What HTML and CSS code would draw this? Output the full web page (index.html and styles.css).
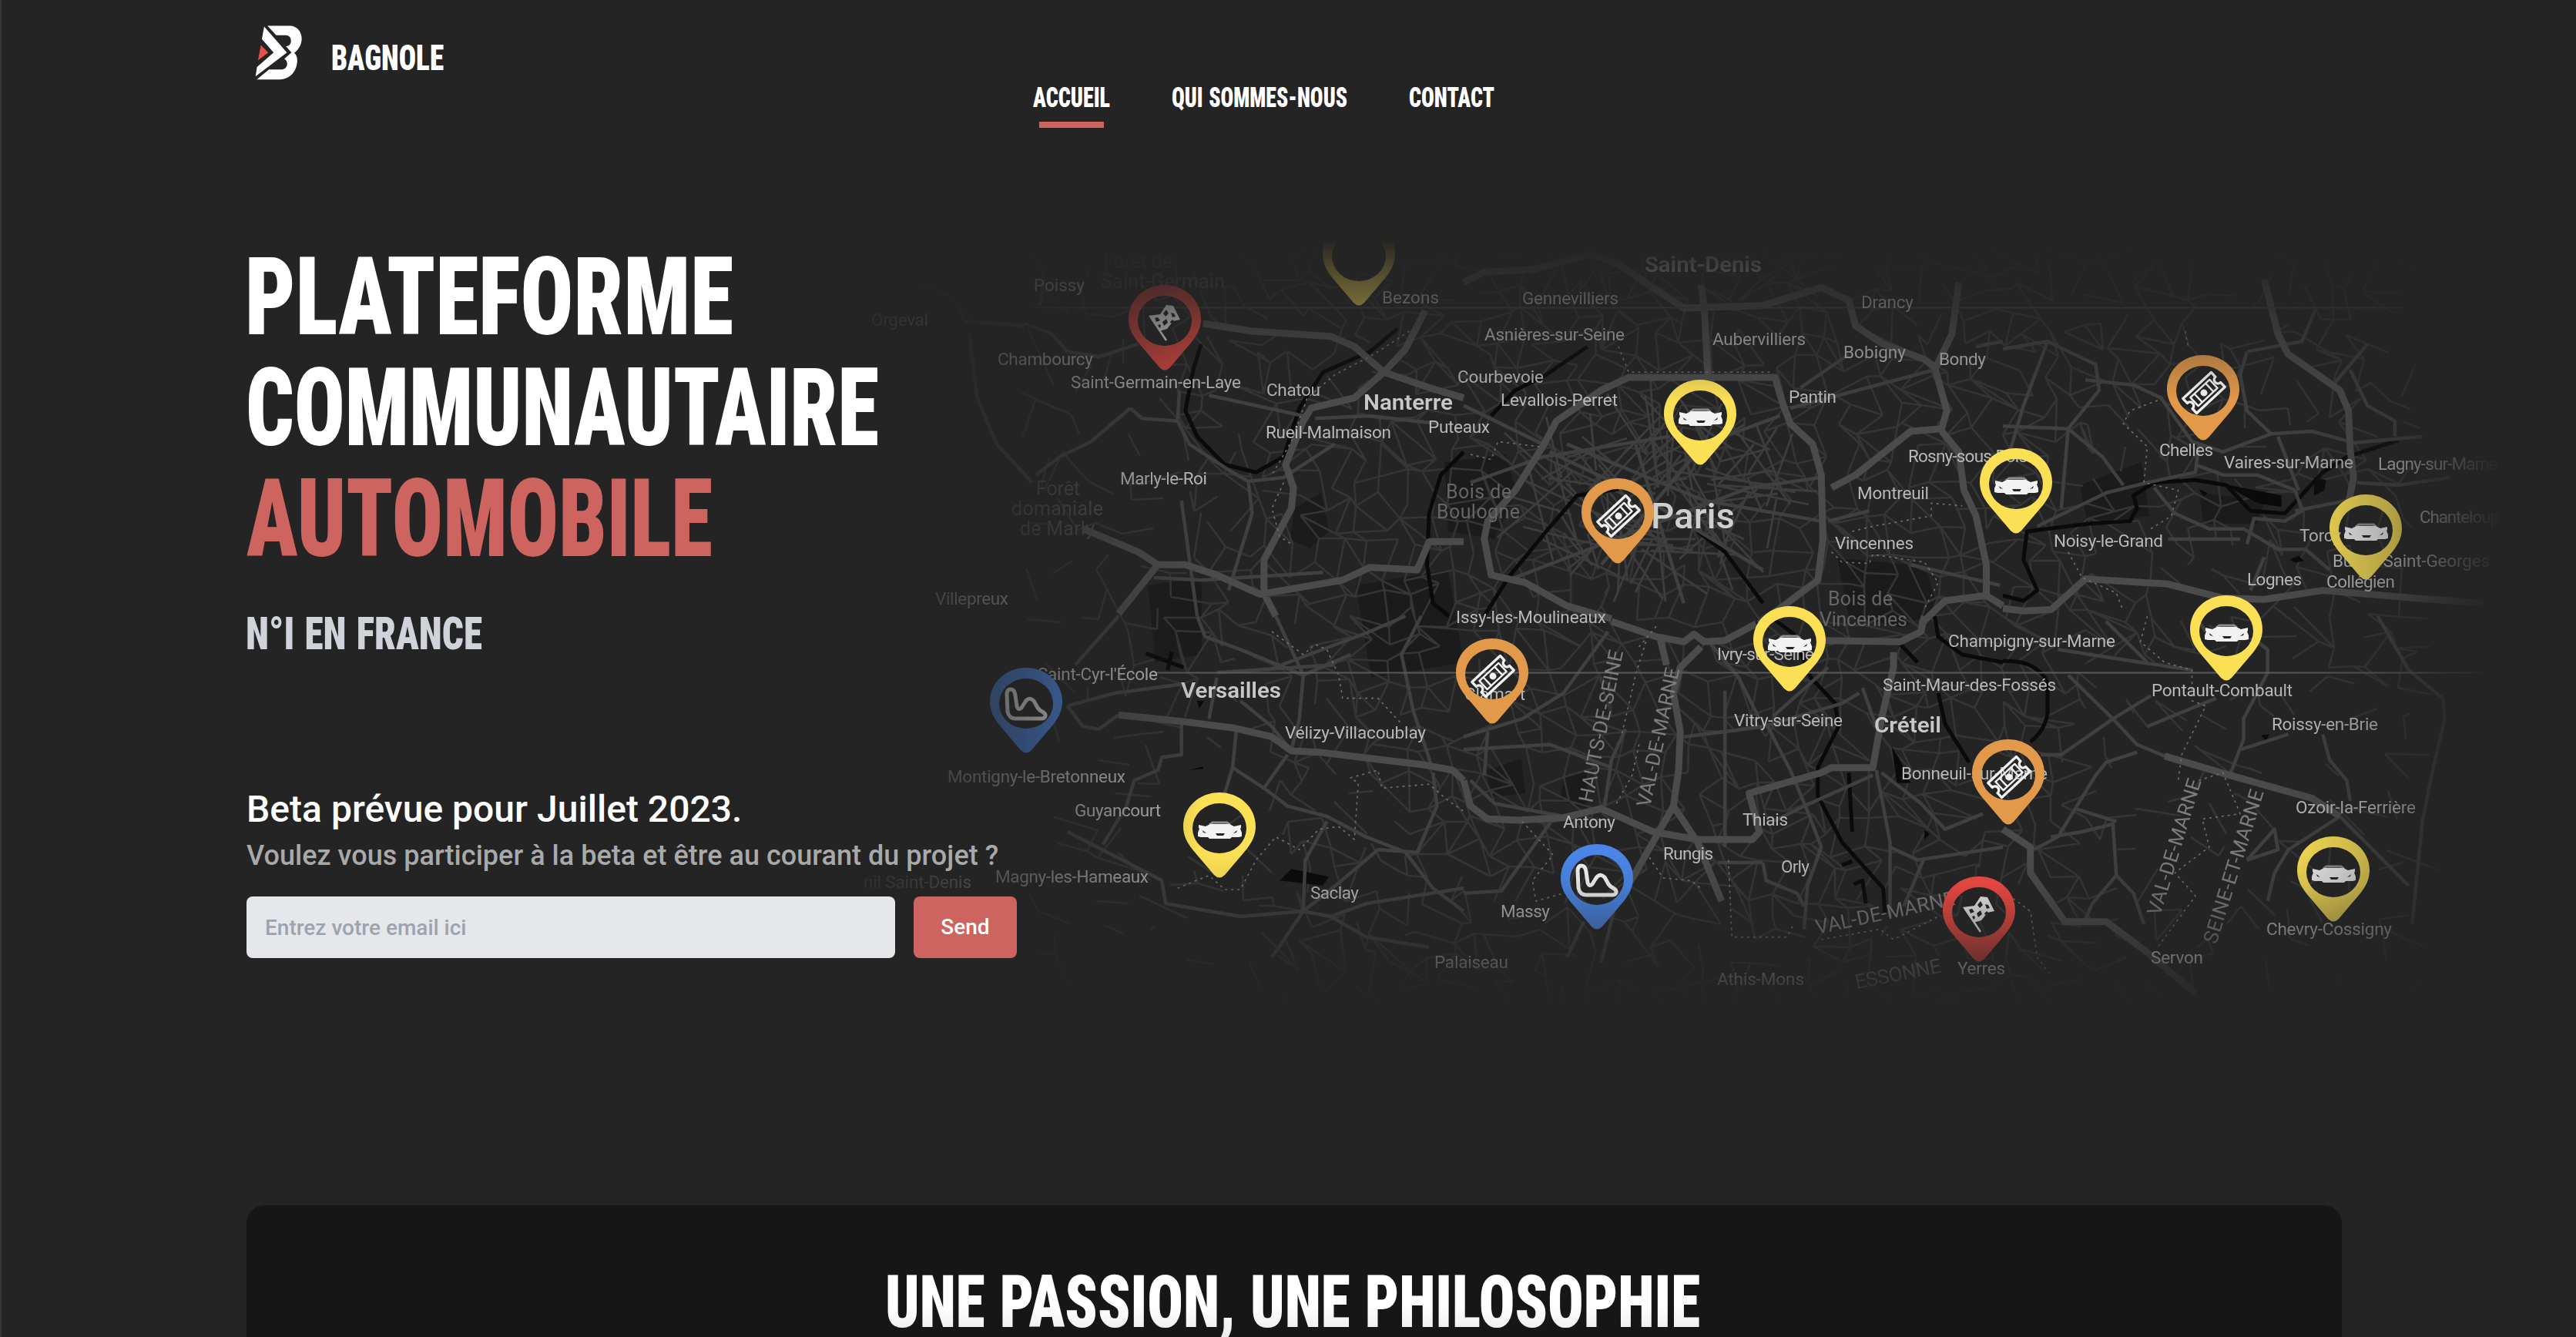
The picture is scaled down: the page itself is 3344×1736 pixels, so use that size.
FILE: index.html
```html
<!DOCTYPE html>
<html lang="fr">
<head>
<meta charset="utf-8">
<title>Bagnole</title>
<link rel="stylesheet" href="styles.css">
</head>
<body>
<svg class="defs" aria-hidden="true">
  <defs>
    <symbol id="pin" viewBox="0 0 94 111"><path fill-rule="evenodd" d="M0 44C0 57 6 66 12 74L40 107Q47 114 54 107L82 74C88 66 94 57 94 44C94 19 73 0 47 0S0 19 0 44ZM47 14a35 32.500 0 1 1 0 65a35 32.500 0 1 1 0-65Z"/></symbol>
    <symbol id="car" viewBox="0 0 94 111"><path fill="none" stroke="#8d8d8d" stroke-width="3" d="M34 42l4-3h19l4 3"/><path fill="#f2f2f2" fill-rule="evenodd" d="M20 42l9 2 6-3h25l6 3 9-2v4l-1 1 2 5v5l-4 1h-9l-2 2H34l-2-2h-9l-4-1v-5l2-5-1-1ZM42 53h12l-2 3h-8ZM25 49l5 4-4-1ZM70 49l-5 4 4-1Z"/></symbol>
    <symbol id="ticket" viewBox="0 0 94 111"><g transform="translate(48 49) rotate(-43)" fill="none" stroke="#f2f2f2" stroke-linejoin="round"><path stroke-width="3.4" d="M-25-13h50v8a5 5 0 0 0 0 10v8h-50v-8a5 5 0 0 0 0-10Z"/><path stroke-width="2.4" d="M-17-7.500h34v15h-34ZM-10-7v14M10-7v14"/><circle r="4.500" fill="#f2f2f2" stroke="none"/></g></symbol>
    <symbol id="track" viewBox="0 0 94 111"><path transform="translate(18 26)" fill="none" stroke="#f2f2f2" stroke-width="5" stroke-linejoin="round" d="M4 9Q4 2 9 2Q14 2 15 10L17 24Q19 30 23 26L28 18Q33 11 39 17L44 26Q46 29 50 31Q55 34 54 37Q53 40 49 40H15Q7 40 5 31Z"/></symbol>
    <symbol id="flag" viewBox="0 0 94 111"><g transform="translate(26 25)"><path fill="none" stroke="#f2f2f2" stroke-width="2.600" d="M3 17l20 30"/><path fill="#f2f2f2" d="M0 15l15-2 8-12 9 1 9 18-9 2-8 10-10 3Z"/><path fill="#242424" d="M8 18l4-1 3 4-5 2ZM19 12l4-5 3 5-4 4ZM18 23l5-4 2 5-5 4ZM29 11l4 1 2 4-4 1ZM12 27l3-1 1 3-2 2ZM28 23l3-3 2 2-4 3Z"/></g></symbol>
  </defs>
</svg>

<svg class="map" viewBox="1100 290 2244 1050" aria-label="Carte">
  <g class="woods">
    <path d="M1875 600L1955 590 1968 640 1940 700 1880 690ZM2385 725L2500 735 2515 790 2470 815 2400 800ZM1760 760L1880 740 1900 860 1780 880ZM1680 660L1715 640 1725 690 1700 712 1675 700ZM1490 760L1560 750 1560 850 1500 860ZM2700 630L2780 600 2790 670 2710 680ZM2855 640L2940 650 2930 680 2860 680ZM2030 1010L2060 1000 2060 1050 2025 1040ZM1930 1000L1975 985 1980 1030 1935 1035Z"/>
  </g>
  <path id="streets" class="streets"/>
  <path id="avenues" class="avenues"/>

  <g class="water">
    <g transform="translate(1100 300) scale(.5102 .3333)"><path d="M1400 380L1330 470 1210 550 1150 690 1110 880 1040 940 960 910 890 800 860 700 880 540 900 440M1568 860L1510 950 1480 1100 1475 1300 1490 1450 1530 1500"/></g>
    <g transform="translate(1900 300) scale(.4464 .3333)"><path d="M60 1500L130 1350 240 1170 330 1030 450 1005M680 1170L760 1250 870 1450M360 450L240 560 150 620 80 720"/></g>
    <g transform="translate(2600 300) scale(.4464 .3333)"><path d="M0 1420L60 1440 100 1400 60 1280 70 1170 250 1140 370 1130 390 1080 380 1030 440 980 560 970 650 990 720 1090 820 1100 930 940 1000 880 1150 815"/><path class="lake" d="M640 985L810 1030 810 1075 740 1060ZM905 960L940 970 935 1010 905 1030ZM570 1005L595 1020 585 1035ZM835 1280L860 1265 875 1285 850 1292Z"/></g>
    <g transform="translate(1900 800) scale(.4464 .3333)"><path d="M900 10L960 70 1010 240 1080 340 1090 430 1030 590 1030 700 1100 880 1220 1060 1225 1160M1270 110L1320 180M1370 0L1380 80 1450 150 1568 180M1380 300L1400 420 1470 570M1120 610L1130 840M1100 970L1130 955M1135 1045L1160 1030 1170 1120"/><path class="lake" d="M1245 510L1265 550 1300 650 1260 650ZM1340 830L1355 850 1340 870Z"/></g>
    <g transform="translate(1100 800) scale(.5102 .3333)"><path class="lake" d="M1100 1030L1130 985 1225 1015 1210 1050ZM890 330L908 330 895 360ZM870 600L905 585 905 595Z"/><path d="M760 145L855 200M825 140L815 210"/></g>
    <g transform="translate(2600 800) scale(.4464 .3333)"><path d="M0 175Q100 170 130 260L130 380Q120 450 80 490"/><path class="lake" d="M750 465L775 460 765 485Z"/></g>
  </g>

  <g class="roads">
    <g transform="translate(1100 300) scale(.5102 .3333)"><path d="M845 620L840 740 870 830 980 940 1020 975 1110 960 1240 830M1020 975L1030 1100 990 1300 970 1400M720 690L620 820 540 880 480 950M450 360L520 400 560 470 640 490 740 440M310 400L330 650 380 830 470 980M460 60L500 170 490 290M180 200L270 260 300 350 450 370M780 1350L900 1360 1210 1330M850 1050L890 1500M720 690L750 730 840 740M920 640L1160 720M1190 730L1330 720 1500 750"/></g>
    <g transform="translate(1900 300) scale(.4464 .3333)"><path d="M1120 480L980 610M1370 540L950 690M0 680L230 830M1490 450L1568 430M20 980L230 880 600 800M250 860L500 1020 870 1320M500 830L640 1450M920 720L700 830 400 1300M1040 1130L700 1050 300 830M1040 960L830 1000 130 1360M1300 1300L1560 1380M1060 1130L1180 1090"/></g>
    <g transform="translate(2600 300) scale(.4464 .3333)"><path d="M0 460L130 430 270 520 280 620 190 770 290 880 350 990M240 580L380 600 460 650 550 820 640 860 780 790 900 780 1020 825 1220 800M100 1150L300 1020 420 980 560 940 570 830M560 910L640 950 740 950 850 1010M440 1000L500 1100 600 1160 700 1160 800 1240 880 1240 950 1320M480 1200L690 1200M710 470L690 560 710 700 780 790M710 470L870 430 910 300M960 600L1060 440M1010 540L1060 680 1140 740 1140 800M760 1270L720 1400M850 1090L1000 1050M850 1010L870 1090 820 1130 730 1120 710 1220M190 770L0 760M190 770L170 1080M130 430L60 680 20 860M1030 980L1150 990 1300 960M800 800L860 1010"/></g>
    <g transform="translate(1100 800) scale(.5102 .3333)"><path d="M1130 525L1080 430 1000 330M1120 540L1060 670 1120 740 1220 780 1320 860 1420 920 1490 1060 1568 1150M1490 610L1500 740 1450 920 1350 910 1250 1040 1160 1150 1080 1330M1160 1150L1165 950 1220 800M560 350L680 300 850 265M690 0L580 190M850 410L850 540 800 550 790 600 730 640 710 740 650 890M560 840L700 950 800 1030 810 1120 1000 1170 1160 1150 1230 1170 1320 1120 1568 1060M1230 1170L1320 1250 1480 1290M940 240L920 400M890 0L910 80 1000 130 1160 230 1150 400 1130 520M1090 0L1160 230M1460 0L1410 150 1440 370 1490 600M1070 210L1330 60 1420 0M990 440L980 590 1060 670M980 590L960 690M940 220L1240 190M1160 230L1220 190 1280 150M690 385L640 440 600 430 560 350"/></g>
    <g transform="translate(1900 800) scale(.4464 .3333)"><path d="M440 1130L400 1350M350 1190L300 1330M1200 600L1240 880 1240 1170M1190 620L990 740 900 800M1215 610L1330 730 1400 830 1510 770M0 470L170 400 290 300 420 60M70 450L60 620M470 440L430 560 410 740M760 290L760 900M880 420L950 600 1000 760 1040 900 1000 1050 990 1220M640 470L760 450 870 430 1100 340 1150 300M870 960L880 1030 970 1080 990 1130M740 960L870 960M1160 280L1200 430M20 640L90 730 290 780M0 1080L110 1070 260 790M0 520L250 500 430 590M860 400L800 240 720 110M900 390L1060 200M1240 900L1320 950 1568 900M1340 940L1280 1130"/></g>
    <g transform="translate(2600 800) scale(.4464 .3333)"><path d="M110 540L170 540 320 400 430 310M190 230L320 400 390 500 470 545M660 620L700 480 700 400 770 220 770 130 740 100M90 910L160 860 270 620 300 570 390 530M1090 0L1180 210 1280 320 1285 400 1250 600 1220 800 1190 1200M930 460L950 560 1000 640 1010 720M980 780L830 910 790 1000 770 1110M710 950L800 910 790 830 710 950M690 520L830 460M980 780L1180 1050M140 860L230 840 320 810 330 1010 260 1120 240 1180M330 1010L380 1080 410 1200M210 750L330 800M160 130L400 180 550 210M560 0L590 60M420 430L620 320M300 20L420 180"/></g>
  </g>

  <g class="highways">
    <g transform="translate(1100 300) scale(.5102 .3333)"><path d="M905 360L1030 390 1230 410 1290 450 1365 550 1480 610 1568 650M1470 310L1420 460 1365 550 1290 650 1180 690 1160 740 1115 910 1135 1000 1130 1080 1060 1280 1060 1410 1090 1500M600 1160L740 1250 790 1300 860 1300 940 1340 1050 1415 1260 1360 1330 1310 1450 1320 1480 1210 1568 1210M790 1300L690 1490"/></g>
    <g transform="translate(1900 300) scale(.4464 .3333)"><path d="M430 1510L300 1460 180 1370 80 1340 60 1200 70 1130 150 1010 230 840 270 740 400 620 480 570 905 570 930 680 950 750 1015 830 1040 950 1045 1200 1030 1360 940 1450 860 1530M690 210L700 300 710 560M1070 1000L1140 950 1300 780 1390 770 1405 700 1370 530 1340 500 1220 440 1140 370 1120 270 1040 220 870 290 640 300 450 130 370 90 200 150 60 160 0 200M1390 780L1440 860 1455 1010 1490 1110 1520 1300 1520 1420M1330 1530L1400 1440 1520 1420 1568 1460M1440 200L1420 400 1370 540"/></g>
    <g transform="translate(2600 300) scale(.4464 .3333)"><path d="M760 190L800 400 830 480 980 620 1005 700 1010 850 1020 960 1005 1060M0 1470L60 1480 140 1475 240 1355 480 1375 640 1430 760 1435 930 1400 1200 1430 1400 1450"/></g>
    <g transform="translate(1100 800) scale(.5102 .3333)"><path d="M690 385L850 410 980 435 1080 470 1130 525 1200 530 1470 580 1540 600 1568 640"/></g>
    <g transform="translate(1900 800) scale(.4464 .3333)"><path d="M430 20L560 80 640 100 670 70 700 100 760 95 850 30M570 80L590 190M690 120L630 200 610 300 630 450 625 600 610 740 500 1000 440 1130M610 740L680 880M1050 95L1270 100 1330 60 1340 0M0 640L20 740 70 790 160 795 290 785 400 750 550 840 680 870 840 870 860 840 830 690 1040 610 1070 590 1190 590 1215 400 1250 200 1250 140M680 880L750 1110"/></g>
    <g transform="translate(2600 800) scale(.4464 .3333)"><path d="M470 545L660 620 900 710 980 780M0 830L80 900 80 1000 180 1190 300 1190 420 1310 560 1470"/></g>
  </g>

  <g class="limits">
    <g transform="translate(1100 300) scale(.5102 .3333)"><path d="M1430 390L1340 480 1240 560 1170 650 1130 820 1080 950M1110 980L1080 1080 1100 1190 1130 1220"/></g>
    <g transform="translate(1900 300) scale(.4464 .3333)"><path d="M450 450L480 550 900 550M20 870L80 890 100 820 220 840M1070 1250L1100 1290 1180 1295 1190 1260 1340 1290 1380 1370 1340 1470M1130 1170L1190 1150 1360 1110 1360 1060 1450 1070"/></g>
    <g transform="translate(2600 300) scale(.4464 .3333)"><path d="M530 390L540 460M450 660L370 700 350 750 420 840 410 980 510 1010 490 1110 430 1160M190 1250L230 1350 330 1410 350 1480"/></g>
    <g transform="translate(1100 800) scale(.5102 .3333)"><path d="M1080 60L1160 150 1190 110 1220 130 1250 230 1260 320 1350 320 1410 420M840 1060L920 1010 960 1065 1000 1065 1040 950 1090 860 1150 910 1200 830 1250 820 1290 870 1300 650 1280 630 1350 600 1360 670 1480 655 1530 720 1568 760"/></g>
    <g transform="translate(1900 800) scale(.4464 .3333)"><path d="M530 100L500 230 460 460M510 500L490 620 440 740M170 800L260 930 200 1030 210 1110 290 1080M540 940L580 1020 660 1030 690 1060M770 950L780 1250 940 1250 960 1200M1040 1260L1210 1220 1250 1260 1380 1170M560 40L510 120"/></g>
    <g transform="translate(2600 800) scale(.4464 .3333)"><path d="M420 0L400 100 470 180 550 210 550 330 590 350 520 540 510 640M570 640L640 610 690 770 580 790 600 900 500 1000 560 1090 450 1290M30 1100L80 1150 100 1330 140 1400"/></g>
  </g>
  <path class="seam" d="M1340 399.500H3120"/>
  <path class="seam seam-light" d="M1500 873.500H3220"/>

  <g class="places">
    <text x="1342" y="378" textLength="66" class="near">Poissy</text>
    <text x="1131" y="423" textLength="74" class="near">Orgeval</text>
    <text x="1295" y="474" textLength="124">Chambourcy</text>
    <text x="1390" y="504" textLength="221">Saint-Germain-en-Laye</text>
    <text x="1644" y="514" textLength="70">Chatou</text>
    <text x="1643" y="569" textLength="163">Rueil-Malmaison</text>
    <text x="1454" y="629" textLength="113">Marly-le-Roi</text>
    <text x="1214" y="785" textLength="95">Villepreux</text>
    <text x="1794" y="394" textLength="74">Bezons</text>
    <text x="1976" y="395" textLength="125">Gennevilliers</text>
    <text x="1927" y="442" textLength="182">Asnières-sur-Seine</text>
    <text x="1892" y="497" textLength="112">Courbevoie</text>
    <text x="1948" y="527" textLength="152">Levallois-Perret</text>
    <text x="1854" y="562" textLength="80">Puteaux</text>
    <text x="2223" y="448" textLength="121">Aubervilliers</text>
    <text x="2393" y="465" textLength="81">Bobigny</text>
    <text x="2517" y="474" textLength="61">Bondy</text>
    <text x="2416" y="400" textLength="68">Drancy</text>
    <text x="2322" y="523" textLength="62">Pantin</text>
    <text x="2477" y="600" textLength="155">Rosny-sous-Bois</text>
    <text x="2411" y="648" textLength="93">Montreuil</text>
    <text x="2382" y="713" textLength="102">Vincennes</text>
    <text x="1890" y="809" textLength="195">Issy-les-Moulineaux</text>
    <text x="2803" y="592" textLength="70">Chelles</text>
    <text x="2887" y="608" textLength="168">Vaires-sur-Marne</text>
    <text x="3087" y="610" textLength="156">Lagny-sur-Marne</text>
    <text x="2985" y="703" textLength="54">Torcy</text>
    <text x="2666" y="710" textLength="142">Noisy-le-Grand</text>
    <text x="3141" y="679" textLength="104">Chanteloup</text>
    <text x="3028" y="736" textLength="204">Bussy-Saint-Georges</text>
    <text x="2917" y="760" textLength="71">Lognes</text>
    <text x="3020" y="763" textLength="89">Collégien</text>
    <text x="1347" y="883" textLength="156">Saint-Cyr-l'École</text>
    <text x="1668" y="959" textLength="183">Vélizy-Villacoublay</text>
    <text x="1230" y="1016" textLength="231">Montigny-le-Bretonneux</text>
    <text x="1395" y="1060" textLength="112">Guyancourt</text>
    <text x="1292" y="1146" textLength="199">Magny-les-Hameaux</text>
    <text x="1121" y="1153" textLength="140">nil Saint-Denis</text>
    <text x="1701" y="1167" textLength="63">Saclay</text>
    <text x="1862" y="1257" textLength="96">Palaiseau</text>
    <text x="1901" y="909" textLength="79">Clamart</text>
    <text x="2229" y="857" textLength="126">Ivry-sur-Seine</text>
    <text x="2444" y="897" textLength="225">Saint-Maur-des-Fossés</text>
    <text x="2529" y="840" textLength="217">Champigny-sur-Marne</text>
    <text x="2251" y="943" textLength="141">Vitry-sur-Seine</text>
    <text x="2468" y="1012" textLength="190">Bonneuil-sur-Marne</text>
    <text x="2029" y="1075" textLength="68">Antony</text>
    <text x="2262" y="1072" textLength="59">Thiais</text>
    <text x="2159" y="1116" textLength="65">Rungis</text>
    <text x="2312" y="1133" textLength="37">Orly</text>
    <text x="1948" y="1191" textLength="64">Massy</text>
    <text x="2229" y="1279" textLength="113">Athis-Mons</text>
    <text x="2541" y="1265" textLength="62" class="near">Yerres</text>
    <text x="2793" y="904" textLength="183">Pontault-Combault</text>
    <text x="2949" y="948" textLength="138">Roissy-en-Brie</text>
    <text x="2980" y="1056" textLength="156">Ozoir-la-Ferrière</text>
    <text x="2942" y="1214" textLength="163">Chevry-Cossigny</text>
    <text x="2792" y="1251" textLength="68" class="near">Servon</text>
  </g>
  <g class="places towns">
    <text x="1770" y="532" textLength="116" lengthAdjust="spacingAndGlyphs">Nanterre</text>
    <text x="1533" y="906" textLength="130" lengthAdjust="spacingAndGlyphs">Versailles</text>
    <text x="2433" y="951" textLength="87" lengthAdjust="spacingAndGlyphs">Créteil</text>
    <text x="2135" y="353" textLength="152" lengthAdjust="spacingAndGlyphs">Saint-Denis</text>
  </g>
  <text class="capital" x="2143" y="686" textLength="109" lengthAdjust="spacingAndGlyphs">Paris</text>
  <g class="parks">
    <g class="forest">
      <text x="1345" y="643" textLength="57">Forêt</text>
      <text x="1313" y="669" textLength="119">domaniale</text>
      <text x="1324" y="695" textLength="97">de Marly</text>
      <text x="1432" y="348" textLength="90">Forêt de</text>
      <text x="1429" y="374" textLength="161">Saint-Germain</text>
    </g>
    <text x="1877" y="647" textLength="85">Bois de</text>
    <text x="1865" y="673" textLength="108">Boulogne</text>
    <text x="2373" y="786" textLength="84">Bois de</text>
    <text x="2362" y="813" textLength="114">Vincennes</text>
  </g>
  <g class="counties">
    <text transform="translate(2067 1043) rotate(-78.500)" textLength="201">HAUTS-DE-SEINE</text>
    <text transform="translate(2142 1049) rotate(-78)" textLength="184">VAL-DE-MARNE</text>
    <text transform="translate(2804 1190) rotate(-73)" textLength="184">VAL-DE-MARNE</text>
    <text transform="translate(2877 1227) rotate(-72.700)" textLength="208">SEINE-ET-MARNE</text>
    <text transform="translate(2359 1213) rotate(-12)" textLength="184">VAL-DE-MARNE</text>
    <text transform="translate(2410 1284) rotate(-11)" textLength="113">ESSONNE</text>
  </g>

  <g class="pins">
    <g class="yellow" transform="translate(2160 493)"><use href="#pin" width="94" height="111"/><use href="#car" width="94" height="111"/></g>
    <g class="yellow" transform="translate(2570 582)"><use href="#pin" width="94" height="111"/><use href="#car" width="94" height="111"/></g>
    <g class="yellow" transform="translate(3024 642)"><use href="#pin" width="94" height="111"/><use href="#car" width="94" height="111"/></g>
    <g class="yellow" transform="translate(2843 773)"><use href="#pin" width="94" height="111"/><use href="#car" width="94" height="111"/></g>
    <g class="yellow" transform="translate(2276 787)"><use href="#pin" width="94" height="111"/><use href="#car" width="94" height="111"/></g>
    <g class="yellow" transform="translate(1536 1029)"><use href="#pin" width="94" height="111"/><use href="#car" width="94" height="111"/></g>
    <g class="yellow" transform="translate(2982 1086)"><use href="#pin" width="94" height="111"/><use href="#car" width="94" height="111"/></g>
    <g class="yellow" transform="translate(1717 286)"><use href="#pin" width="94" height="111"/></g>
    <g class="orange" transform="translate(2053 621)"><use href="#pin" width="94" height="111"/><use href="#ticket" width="94" height="111"/></g>
    <g class="orange" transform="translate(2813 461)"><use href="#pin" width="94" height="111"/><use href="#ticket" width="94" height="111"/></g>
    <g class="orange" transform="translate(1890 829)"><use href="#pin" width="94" height="111"/><use href="#ticket" width="94" height="111"/></g>
    <g class="orange" transform="translate(2560 960)"><use href="#pin" width="94" height="111"/><use href="#ticket" width="94" height="111"/></g>
    <g class="red" transform="translate(1465 370)"><use href="#pin" width="94" height="111"/><use href="#flag" width="94" height="111"/></g>
    <g class="red strong" transform="translate(2522 1138)"><use href="#pin" width="94" height="111"/><use href="#flag" width="94" height="111"/></g>
    <g class="blue" transform="translate(1285 867)"><use href="#pin" width="94" height="111"/><use href="#track" width="94" height="111"/></g>
    <g class="blue" transform="translate(2026 1096)"><use href="#pin" width="94" height="111"/><use href="#track" width="94" height="111"/></g>
  </g>
</svg>

<div class="page">
  <header class="header">
    <a class="brand">
      <svg class="logo" viewBox="93 100 184 213"><g fill="#fff"><path d="M142 101H230C258 101 276 125 276 152C276 175 262 196 247 207C258 217 260 232 258 245C254 285 225 311 190 311H100L148 272H195C210 272 219 262 219 250C219 240 214 234 208 230L236 206L214 181C226 182 234 172 234 160C234 147 226 138 214 138H176Z"/><path d="M129 104L218 206L95 299L101 262L166 206L120 153Z"/></g><path fill="#e0524c" d="M116 176L145 206L105 236Z"/></svg>
      <svg class="display" width="144" height="44"><text x="-2" y="39" font-size="47" textLength="146" lengthAdjust="spacingAndGlyphs">BAGNOLE</text></svg>
    </a>
    <nav class="nav">
      <a class="active"><svg class="display" width="100" height="40"><text x="0" y="33" font-size="36" textLength="100" lengthAdjust="spacingAndGlyphs">ACCUEIL</text></svg></a>
      <a><svg class="display" width="228" height="40"><text x="-1" y="33" font-size="36" textLength="228" lengthAdjust="spacingAndGlyphs">QUI SOMMES-NOUS</text></svg></a>
      <a><svg class="display" width="110" height="40"><text x="-2" y="33" font-size="36" textLength="111" lengthAdjust="spacingAndGlyphs">CONTACT</text></svg></a>
    </nav>
  </header>

  <main class="hero">
    <h1 class="title">
      <svg class="display" width="840" height="144"><text x="-2" y="122" font-size="141" textLength="634" lengthAdjust="spacingAndGlyphs">PLATEFORME</text></svg>
      <svg class="display" width="840" height="144"><text x="-1" y="122" font-size="141" textLength="822" lengthAdjust="spacingAndGlyphs">COMMUNAUTAIRE</text></svg>
      <svg class="display accent" width="840" height="144"><text x="0" y="122" font-size="141" textLength="605" lengthAdjust="spacingAndGlyphs">AUTOMOBILE</text></svg>
    </h1>
    <h2 class="rank"><svg class="display soft" width="320" height="60"><text x="-1" y="51" font-size="59" textLength="307" lengthAdjust="spacingAndGlyphs">N°I EN FRANCE</text></svg></h2>
    <section class="signup">
      <p class="beta">Beta prévue pour Juillet 2023.</p>
      <p class="ask">Voulez vous participer à la beta et être au courant du projet ?</p>
      <form class="form">
        <input class="email" type="email" placeholder="Entrez votre email ici">
        <button class="send" type="button">Send</button>
      </form>
    </section>
  </main>

  <section class="card">
    <svg class="display" width="1060" height="98">
      <defs><linearGradient id="fade" gradientUnits="userSpaceOnUse" x1="0" y1="30" x2="0" y2="98"><stop offset=".4" stop-color="#fff"/><stop offset="1" stop-color="#eaeaea"/></linearGradient></defs>
      <text x="-1" y="85" font-size="95" fill="url(#fade)" textLength="1058" lengthAdjust="spacingAndGlyphs">UNE PASSION, UNE PHILOSOPHIE</text>
    </svg>
  </section>
</div>
<script src="streets.js"></script>
</body>
</html>
```
FILE: styles.css
```css
* { box-sizing: border-box; margin: 0; padding: 0; }
body {
  width: 3344px;
  height: 1736px;
  overflow: hidden;
  position: relative;
  background: #242424;
  color: #fff;
  font-family: Roboto, "Liberation Sans", sans-serif;
}
.defs { position: absolute; width: 0; height: 0; }

.page {
  position: relative;
  height: 1736px;
  padding-left: 320px;
  display: flex;
  flex-direction: column;
  box-shadow: inset 2px 0 0 #363636;
}
.display {
  display: block;
  overflow: visible;
  fill: #fff;
  font-family: Roboto, "Liberation Sans", sans-serif;
  font-weight: 900;
  font-stretch: 75%;
  word-spacing: .09em;
}
.accent { fill: #cd645f; }
.soft { fill: #d1d3da; }

.header { display: flex; height: 312px; }
.brand { display: flex; width: 1021px; padding: 33px 0 0 11px; gap: 40px; }
.logo { width: 61px; height: 71px; }
.brand .display { margin-top: 19px; }
.nav { display: flex; gap: 81px; padding-top: 106px; align-items: flex-start; }
.nav a { display: flex; flex-direction: column; align-items: center; }
.active::after { content: ""; width: 84px; height: 8px; margin-top: 12px; background: #cd645f; }

.hero { height: 1253px; }
.title { width: 840px; }
.rank { margin-top: 48px; height: 60px; }
.signup { margin-top: 167px; width: 1000px; }
.title, .rank { display: flex; flex-direction: column; }
.beta { font-size: 48px; line-height: 64px; font-weight: 500; letter-spacing: .02px; }
.ask { font-size: 36px; line-height: 56px; font-weight: 500; color: #a9a9a9; white-space: nowrap; letter-spacing: .03px; }
.form { display: flex; gap: 24px; margin-top: 25px; }
.email {
  width: 842px;
  height: 80px;
  padding: 0 24px;
  border: 0;
  border-radius: 8px;
  background: #e5e7eb;
  font: 500 28px Roboto, "Liberation Sans", sans-serif;
}
.email::placeholder { color: #9ca3af; opacity: 1; }
.send {
  width: 134px;
  height: 80px;
  padding-bottom: 2px;
  border: 0;
  border-radius: 8px;
  background: #cd645f;
  color: #fff;
  font: 500 28px Roboto, "Liberation Sans", sans-serif;
}

.card {
  width: 2720px;
  height: 171px;
  padding-top: 73px;
  border-radius: 24px 24px 0 0;
  background: #161616;
  display: flex;
  justify-content: center;
}

/* The map fades into the page on all four sides. */
.map {
  position: absolute;
  left: 1100px;
  top: 290px;
  width: 2244px;
  height: 1050px;
  -webkit-mask-image:
    linear-gradient(to right, rgba(0,0,0,.08) 20px, rgba(0,0,0,.2) 120px, rgba(0,0,0,.4) 230px, rgba(0,0,0,.68) 340px, #000 460px, #000 1850px, rgba(0,0,0,.85) 1930px, rgba(0,0,0,.65) 2010px, rgba(0,0,0,.32) 2070px, rgba(0,0,0,.06) 2130px, transparent 2160px),
    linear-gradient(to bottom, transparent 20px, rgba(0,0,0,.2) 60px, rgba(0,0,0,.36) 100px, rgba(0,0,0,.66) 155px, #000 230px, #000 820px, rgba(0,0,0,.9) 860px, rgba(0,0,0,.64) 910px, rgba(0,0,0,.3) 965px, transparent 1030px);
  -webkit-mask-composite: source-in;
  mask-composite: intersect;
}
.map path { vector-effect: non-scaling-stroke; }
.woods { fill: #1b1b1b; }
.streets, .avenues, .water, .roads, .highways, .limits, .seam { fill: none; stroke-linejoin: round; }
.streets { stroke: #353535; stroke-width: 2.6; }
.avenues { stroke: #3d3d3d; stroke-width: 2.8; }
.roads { stroke: #404040; stroke-width: 4.500; }
.highways { stroke: #4b4b4b; stroke-width: 9; }
.water { stroke: #0a0a0a; stroke-width: 5; }
.water .lake { fill: #0a0a0a; stroke: none; }
.limits { stroke: #707070; stroke-width: 1.600; stroke-dasharray: 3 5; }
.seam { stroke: #424242; stroke-width: 2; }
.seam-light { stroke: #5a5a5a; }
.places { fill: #b8b8b8; font-size: 22.500px; }
.places .near { fill: #e6e6e6; }
.towns { fill: #c8c8c8; font-size: 28px; font-weight: 600; }
.capital { fill: #cfcfcf; font-size: 46px; font-weight: 500; }
.parks { fill: #666; font-size: 25px; }
.forest { fill: #4c4c4c; }
.counties { fill: #7c7c7c; font-size: 26px; }
.yellow { fill: #fbe055; }
.orange { fill: #e2994a; }
.red { fill: #dd4740; }
.strong { fill: #f44a42; }
.blue { fill: #4a86e8; }
```
FILE: streets.js
```js
// Fills the map with a dense, repeatable network of minor streets.
(function () {
  var seed = 75011;
  function rnd() {
    seed = (seed * 16807) % 2147483647;
    return seed / 2147483647;
  }
  var cell = 30, cols = 60, rows = 33, x0 = 1340, y0 = 320;
  var pts = [];
  for (var r = 0; r <= rows; r++) {
    pts.push([]);
    for (var c = 0; c <= cols; c++) {
      pts[r].push([
        Math.round(x0 + (c + (rnd() - 0.5) * 0.95 + (r % 2) * 0.4) * cell),
        Math.round(y0 + (r + (rnd() - 0.5) * 0.95) * cell)
      ]);
    }
  }
  function density(p) {
    var d = Math.hypot((p[0] - 2200) / 520, (p[1] - 740) / 420);
    if (p[0] > 2700 && p[1] > 850) return 0.16;
    if (p[0] < 1640 && p[1] > 900) return 0.12;
    if (p[0] < 1520) return 0.2;
    return d < 1 ? 0.8 : d < 1.5 ? 0.5 : 0.34;
  }
  function seg(a, b) {
    return 'M' + a[0] + ' ' + a[1] + 'L' + b[0] + ' ' + b[1];
  }
  var d = '';
  for (r = 0; r < rows; r++) {
    for (c = 0; c < cols; c++) {
      var p = pts[r][c], k = density(p);
      if (rnd() < k) d += seg(p, pts[r][c + 1]);
      if (rnd() < k) d += seg(p, pts[r + 1][c]);
      if (rnd() < k * 0.4) d += seg(p, pts[r + 1][c + 1]);
    }
  }
  document.getElementById('streets').setAttribute('d', d);

  var a = '';
  for (var i = 0; i < 90; i++) {
    var t = rnd() * Math.PI * 2, q = Math.sqrt(rnd());
    var cx = 2150 + Math.cos(t) * q * 170, cy = 645 + Math.sin(t) * q * 105;
    var ang = rnd() * Math.PI, len = 20 + rnd() * 50;
    var dx = Math.cos(ang) * len, dy = Math.sin(ang) * len;
    a += seg([Math.round(cx - dx), Math.round(cy - dy)], [Math.round(cx + dx), Math.round(cy + dy)]);
  }
  document.getElementById('avenues').setAttribute('d', a);
})();
```
